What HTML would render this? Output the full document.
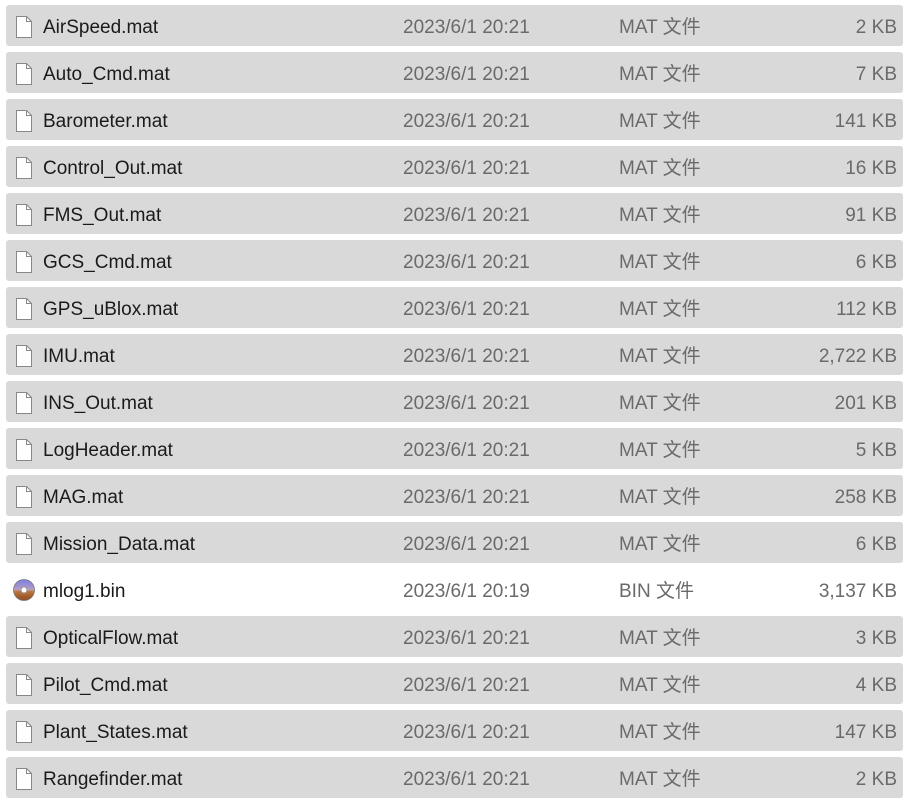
<!DOCTYPE html>
<html><head><meta charset="utf-8"><style>
body{margin:0;background:#fff;width:919px;height:808px;overflow:hidden;font-family:"Liberation Sans","Noto Sans CJK SC",sans-serif;}
.r{position:absolute;left:6px;width:897px;height:41px;background:#d9d9d9;border-radius:3px;font-size:19px;}
.r.w{background:#fff;}
.r span{position:absolute;top:11px;line-height:23px;white-space:nowrap;}
.n{left:37px;color:#1a1a1a;}
.d{left:397px;color:#6a6a6a;}
.t{left:613px;color:#6a6a6a;}
.s{right:6px;color:#6a6a6a;}
.r svg{position:absolute;left:9px;top:10px;}
</style></head><body>
<div id="c"></div>
<script>
var rows=[["AirSpeed.mat","2 KB"],["Auto_Cmd.mat","7 KB"],["Barometer.mat","141 KB"],["Control_Out.mat","16 KB"],["FMS_Out.mat","91 KB"],["GCS_Cmd.mat","6 KB"],["GPS_uBlox.mat","112 KB"],["IMU.mat","2,722 KB"],["INS_Out.mat","201 KB"],["LogHeader.mat","5 KB"],["MAG.mat","258 KB"],["Mission_Data.mat","6 KB"],["mlog1.bin","3,137 KB"],["OpticalFlow.mat","3 KB"],["Pilot_Cmd.mat","4 KB"],["Plant_States.mat","147 KB"],["Rangefinder.mat","2 KB"]];
var file='<svg width="18" height="24" viewBox="0 0 18 24"><path d="M1.5 1.5h10l5 5v16h-15z" fill="#fff" stroke="#888"/><path d="M11.5 1.5v5h5" fill="none" stroke="#888"/></svg>';
var disc='<svg width="24" height="24" viewBox="0 0 24 24" style="left:6px;top:9px"><defs><linearGradient id="g" x1="0" y1="0" x2="0" y2="1"><stop offset="0" stop-color="#7a7ee8"/><stop offset=".5" stop-color="#b8a0c0"/><stop offset=".55" stop-color="#c07840"/><stop offset="1" stop-color="#8a4a20"/></linearGradient></defs><circle cx="12" cy="12" r="10.5" fill="url(#g)" stroke="#777" stroke-width=".8"/><circle cx="12" cy="12" r="3" fill="#fff" stroke="#999"/></svg>';
var h='';
rows.forEach(function(r,i){var bin=r[0].indexOf('.bin')>0;
h+='<div class="r'+(bin?' w':'')+'" style="top:'+(5+47*i)+'px">'+(bin?disc:file)+'<span class="n">'+r[0]+'</span><span class="d">2023/6/1 20:'+(bin?'19':'21')+'</span><span class="t">'+(bin?'BIN':'MAT')+' 文件</span><span class="s">'+r[1]+'</span></div>';});
document.getElementById('c').innerHTML=h;
</script>
</body></html>
